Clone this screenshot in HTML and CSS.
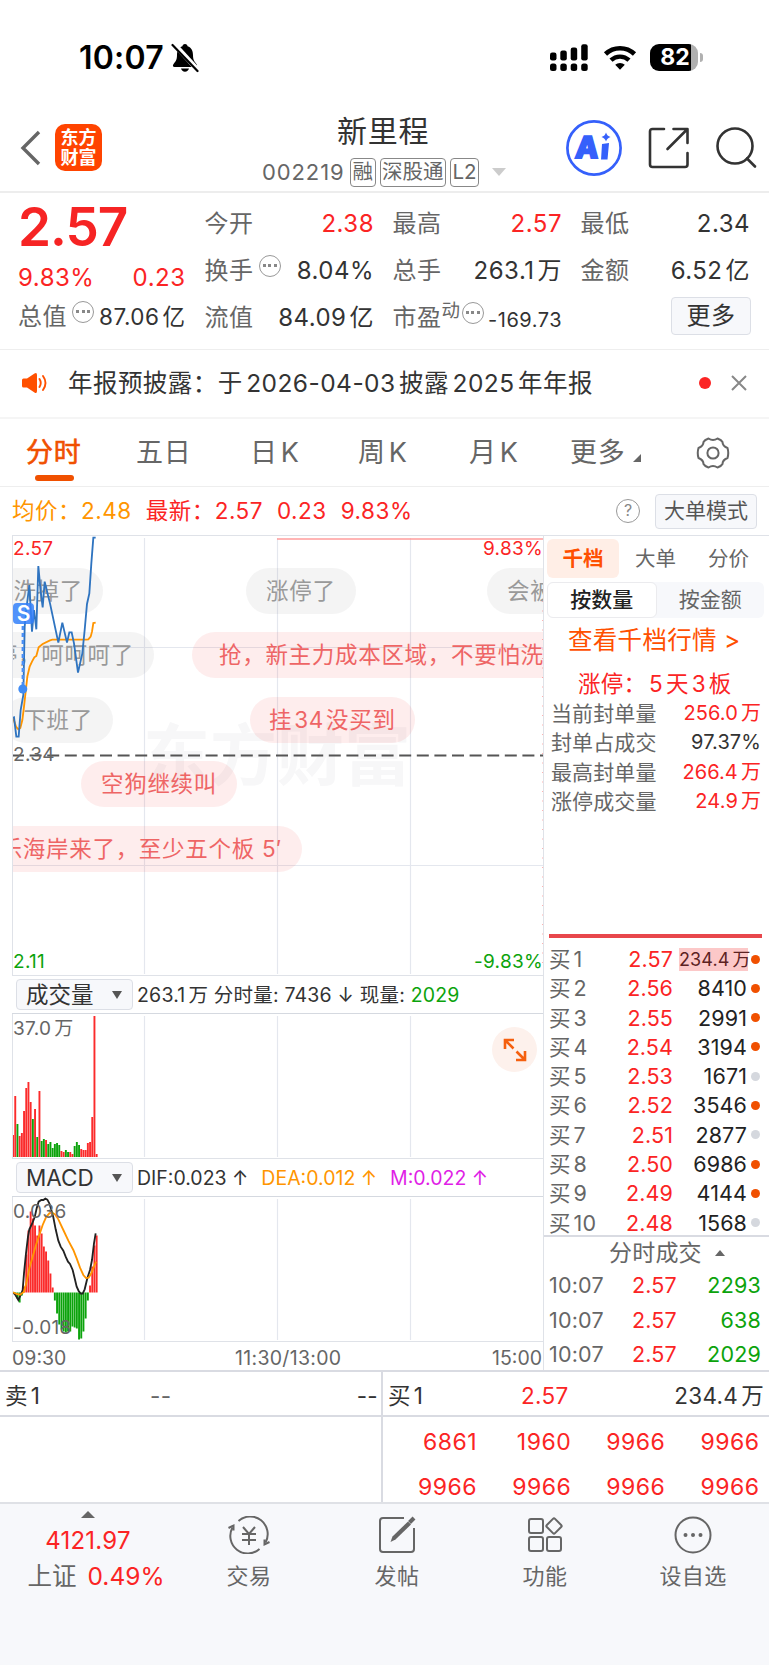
FILE: index.html
```
<!DOCTYPE html>
<html lang="zh-CN">
<head>
    <meta charset="UTF-8">
    <meta name="viewport" content="width=device-width, initial-scale=1.0">
    <title>新里程 002219</title>
    <link rel="stylesheet" href="styles.css">
</head>
<body>
<!--Status bar-->
<div class="status">
    <span class="time">10:07</span>
    <svg class="bell" width="28" height="30" viewBox="0 0 28 30">
        <path d="M14 1c-1.600 0-2.500 1-2.600 2.300C7.600 4.600 6 8 6 12c0 5-1.500 6.500-3.600 9.300C1.400 22.800 2 24 3.600 24h20.800c1.600 0 2.200-1.200 1.200-2.700C23.500 18.500 22 17 22 12c0-4-1.600-7.400-5.400-8.700C16.500 2 15.600 1 14 1zM10 25.500h8c-.5 2-2 3.200-4 3.200s-3.500-1.200-4-3.200z" fill="#000"/>
        <path d="M3 1l24 26" stroke="#fff" stroke-width="5"/>
        <path d="M1.500 2l25 26" stroke="#000" stroke-width="2.200" stroke-linecap="round"/>
    </svg>
    <svg class="signal" width="40" height="28" viewBox="0 0 40 28">
        <rect x="1" y="8.500" width="6.500" height="8" rx="2.200"/><rect x="11.300" y="6.500" width="6.500" height="10" rx="2.200"/>
        <rect x="21.700" y="3.500" width="6.500" height="13" rx="2.200"/><rect x="32.200" y=".3" width="6.500" height="16.200" rx="2.200"/>
        <rect x="1" y="19.500" width="6.500" height="7.500" rx="2.500"/><rect x="11.300" y="19.500" width="6.500" height="7.500" rx="2.500"/>
        <rect x="21.700" y="19.500" width="6.500" height="7.500" rx="2.500"/><rect x="32.200" y="19.500" width="6.500" height="7.500" rx="2.500"/>
    </svg>
    <svg class="wifi" width="34" height="25" viewBox="0 0 34 25">
        <path d="M2.500 9a21 21 0 0 1 29 0" fill="none" stroke="#000" stroke-width="4.600"/>
        <path d="M8 15.200a13 13 0 0 1 18 0" fill="none" stroke="#000" stroke-width="4.400"/>
        <path d="M17 24.800l-4.800-5a7 7 0 0 1 9.600 0z" fill="#000"/>
    </svg>
    <div class="battery"><span>82</span></div><i class="nub"></i>
</div>

<!--Header-->
<header class="header">
    <svg class="back" width="22" height="36" viewBox="0 0 22 36"><path d="M19 2L3 18l16 16" fill="none" stroke="#666" stroke-width="3.400"/></svg>
    <div class="logo">东方<br>财富</div>
    <div class="title">
        <h1>新里程</h1>
        <div class="code"><span>002219</span><b>融</b><b>深股通</b><b>L2</b><i class="down"></i></div>
    </div>
    <svg class="ai" width="56" height="56" viewBox="0 0 56 56">
        <circle cx="28" cy="28" r="26.600" fill="#fff" stroke="#3560fb" stroke-width="2.700"/>
        <text x="9" y="38" class="ai-text" transform="skewX(-4) translate(2.500 0)">A</text>
        <path d="M36 24l7-1-1.500 16.500h-6.500z" fill="#3560fb"/>
        <path d="M40 12.500q1 3.500 4.500 4.500q-3.500 1-4.500 4.500q-1-3.500-4.500-4.500q3.500-1 4.500-4.500z" fill="#3560fb"/>
    </svg>
    <svg class="share" width="42" height="42" viewBox="0 0 42 42" fill="none" stroke="#333" stroke-width="2.600" stroke-linecap="round" stroke-linejoin="round">
        <path d="M16 2H4.500Q2 2 2 4.500v33Q2 40 4.500 40h32.500q2.500 0 2.500-2.500V26"/>
        <path d="M25.500 2h14v14M38.500 3L19.500 22"/>
    </svg>
    <svg class="search" width="42" height="42" viewBox="0 0 42 42" fill="none" stroke="#333" stroke-width="2.600" stroke-linecap="round">
        <circle cx="20" cy="19" r="17.500"/><path d="M32 31.500l8 8"/>
    </svg>
</header>

<!--Quote-->
<section class="quote">
    <div class="now">
        <div class="price">2.57</div>
        <div class="pair change"><span>9.83%</span><span>0.23</span></div>
        <div class="pair cap"><label>总值<i class="more"></i></label><span>87.06<em>亿</em></span></div>
    </div>
    <div class="stats">
        <div class="pair"><label>今开</label><span class="red">2.38</span></div>
        <div class="pair"><label>最高</label><span class="red">2.57</span></div>
        <div class="pair"><label>最低</label><span>2.34</span></div>
        <div class="pair"><label>换手<i class="more"></i></label><span>8.04%</span></div>
        <div class="pair"><label>总手</label><span>263.1<em>万</em></span></div>
        <div class="pair"><label>金额</label><span>6.52<em>亿</em></span></div>
        <div class="pair"><label>流值</label><span>84.09<em>亿</em></span></div>
        <div class="pair"><label>市盈<sup>动</sup><i class="more tight"></i></label><span class="small">-169.73</span></div>
        <div class="pair end"><button class="btn-more">更多</button></div>
    </div>
</section>

<!--Notice-->
<section class="notice">
    <svg width="26" height="22" viewBox="0 0 26 22">
        <path d="M0 8q0-1.500 1.500-1.500H5L12.500 1.500Q15 0 15 3v16q0 3-2.500 1.500L5 15.500H1.500Q0 15.500 0 14z" fill="#ff5000"/>
        <path d="M17.500 7q2.500 4 0 8M21 4q5 7 0 14" fill="none" stroke="#ff5000" stroke-width="1.900" stroke-linecap="round"/>
    </svg>
    <p>年报预披露：于<em>2026-04-03</em>披露<em>2025</em>年年报</p>
    <i class="dot"></i>
    <svg class="close" width="16" height="16" viewBox="0 0 16 16"><path d="M1 1l14 14M15 1L1 15" stroke="#888" stroke-width="2"/></svg>
</section>

<!--Period tabs-->
<nav class="tabs">
    <a class="active">分时</a><a>五日</a><a>日<em>K</em></a><a>周<em>K</em></a><a>月<em>K</em></a><a class="last">更多<i></i></a>
    <svg width="34" height="34" viewBox="-17 -17 34 34" fill="none" stroke="#666" stroke-width="2">
        <path d="M-4.500 -14.500Q0 -11.500 4.500 -14.500Q8.500 -13 9.500 -11Q9.500 -7 14.500 -5Q16 0 14.500 5Q9.500 7 9.500 11Q8.500 13 4.500 14.500Q0 11.500 -4.500 14.500Q-8.500 13 -9.500 11Q-9.500 7 -14.500 5Q-16 0 -14.500 -5Q-9.500 -7 -9.500 -11Q-8.500 -13 -4.500 -14.500z"/>
        <circle r="5.600"/>
    </svg>
</nav>

<div class="legend">
    <span class="orange">均价：2.48</span>
    <span class="red">最新：2.57</span>
    <span class="red">0.23</span>
    <span class="red">9.83%</span>
    <i class="help">?</i>
    <button class="btn-mode">大单模式</button>
</div>

<main class="main">
    <div class="charts">
        <!--Price-->
        <div class="plot price-plot">
            <span class="watermark">东方财富</span>
            <svg width="531" height="440" viewBox="12 535 531 440" fill="none">
                <path class="grid-line" d="M144.500 537V973M277.500 537V973M410.500 537V973M12 646.500H543M12 864.500H543"/>
                <path d="M277 538H543" stroke="#ff9c9c" stroke-width="1.600"/>
                <path d="M542.500 600V970" stroke="#ffb3b3" stroke-dasharray="1 8.500"/>
            </svg>
            <div class="barrage">
                <span class="grey b1">洗掉了</span>
                <span class="grey b2">涨停了</span>
                <span class="grey b3">会被洗</span>
                <span class="grey b4">停，呵呵呵了</span>
                <span class="pink b5">抢，新主力成本区域，不要怕洗</span>
                <span class="grey b6">下班了</span>
                <span class="pink b7">挂<em>34</em>没买到</span>
                <span class="pink b8">空狗继续叫</span>
                <span class="pink b9">乐海岸来了，至少五个板 5′</span>
            </div>
            <svg class="lines" width="531" height="440" viewBox="12 535 531 440" fill="none">
                <path d="M12 754.500H543" stroke="#555" stroke-width="1.800" stroke-dasharray="12 5.600"/>
                <g transform="translate(0 529) scale(.33333)">
                    <path id="avgLine" stroke="#ff9500" stroke-width="5.500"/>
                    <path id="priceLine" stroke="#2f74c0" stroke-width="5.500"/>
                </g>
                <path d="M22.800 625V684" stroke="#4a8ff5" stroke-width="2.400" stroke-dasharray="4 3"/>
                <circle cx="22.800" cy="688" r="4.500" fill="#3f8cf5"/>
            </svg>
            <i class="sell">S</i>
            <span class="lab tl red">2.57</span>
            <span class="lab tr red">9.83%</span>
            <span class="lab ml">2.34</span>
            <span class="lab bl green">2.11</span>
            <span class="lab br green">-9.83%</span>
        </div>
        <!--Volume-->
        <div class="sub-head">
            <button class="picker">成交量<i></i></button>
            <p>263.1<em>万</em> 分时量: 7436 ↓ 现量: <span class="green">2029</span></p>
        </div>
        <div class="plot">
            <svg width="531" height="144" viewBox="12 1014 531 144">
                <path class="grid-line" d="M144.500 1016V1157M277.500 1016V1157M410.500 1016V1157"/>
                <g id="volume"></g>
            </svg>
            <span class="lab vl">37.0<em>万</em></span>
            <i class="expand"><svg width="24" height="24" viewBox="0 0 24 24" fill="none" stroke="#f5600f" stroke-width="2.600"><path d="M2 11V2h9M2.500 2.500l8 8M13 22h9v-9M21.500 21.500l-8-8"/></svg></i>
        </div>
        <!--MACD-->
        <div class="sub-head macd-head">
            <button class="picker">MACD<i></i></button>
            <p>DIF:0.023 ↑</p><p class="orange">DEA:0.012 ↑</p><p class="magenta">M:0.022 ↑</p>
        </div>
        <div class="plot">
            <span class="lab vl">0.036</span>
            <svg width="531" height="144" viewBox="12 1197 531 144" fill="none">
                <path class="grid-line" d="M144.500 1199V1340M277.500 1199V1340M410.500 1199V1340"/>
                <g id="macd"></g>
                <g transform="translate(0 970) scale(.33333)">
                    <path id="difLine" stroke="#222" stroke-width="5.500"/>
                    <path id="deaLine" stroke="#ff9500" stroke-width="5.500"/>
                </g>
            </svg>
            <span class="lab dl">-0.018</span>
        </div>
        <div class="axis"><span>09:30</span><span>11:30/13:00</span><span>15:00</span></div>
    </div>

    <!--Order book-->
    <aside class="book">
        <div class="book-tabs"><a class="active">千档</a><a>大单</a><a>分价</a></div>
        <div class="segment"><a class="active">按数量</a><a>按金额</a></div>
        <a class="link">查看千档行情 &gt;</a>
        <h2>涨停：<em>5</em>天<em>3</em>板</h2>
        <dl>
            <dt>当前封单量</dt><dd class="red">256.0<em>万</em></dd>
            <dt>封单占成交</dt><dd>97.37%</dd>
            <dt>最高封单量</dt><dd class="red">266.4<em>万</em></dd>
            <dt>涨停成交量</dt><dd class="red">24.9<em>万</em></dd>
        </dl>
        <div class="bids" id="bids"></div>
        <div class="deals-title">分时成交<i></i></div>
        <div class="deals">
            <span>10:07</span><span class="red">2.57</span><span class="green">2293</span>
            <span>10:07</span><span class="red">2.57</span><span class="green">638</span>
            <span>10:07</span><span class="red">2.57</span><span class="green">2029</span>
        </div>
    </aside>
</main>

<!--Level 2 queue-->
<section class="queue">
    <div class="side">
        <div class="best"><span>卖<em>1</em></span><span class="dash">--</span><span>--</span></div>
    </div>
    <div class="side buy">
        <div class="best"><span>买<em>1</em></span><span class="red">2.57</span><span>234.4<em>万</em></span></div>
        <div class="orders">
            <span>6861</span><span>1960</span><span>9966</span><span>9966</span>
            <span>9966</span><span>9966</span><span>9966</span><span>9966</span>
        </div>
    </div>
</section>

<!--Bottom bar-->
<footer class="bottom">
    <div class="index">
        <i></i>
        <span class="red">4121.97</span>
        <span class="market">上证<b class="red">0.49%</b></span>
    </div>
    <div class="item">
        <svg width="44" height="38" viewBox="-22 -19 44 38" fill="none" stroke="#666" stroke-width="2">
            <path d="M-10.500 -14A17.500 17.500 0 0 1 16.500 7.500M10.500 14A17.500 17.500 0 0 1 -16.500 -7.500"/>
            <path d="M-20.500 -7l5-2.500v5M20.500 7l-5 2.500v-5M-6 -8l6 7 6-7M0 -1V10M-7 -1H7M-7 5H7"/>
        </svg>
        <span>交易</span>
    </div>
    <div class="item">
        <svg width="38" height="38" viewBox="0 0 38 38" fill="none" stroke="#666" stroke-width="2">
            <path d="M26 2H5Q2 2 2 5v28q0 3 3 3h28q3 0 3-3V12"/>
            <path d="M12.500 26l2-5.500L30 5.500l3 3L17.500 23.500z" fill="#666" stroke="none"/><path d="M31.500 6.500l4.500-4.500" stroke-width="4"/>
        </svg>
        <span>发帖</span>
    </div>
    <div class="item">
        <svg width="36" height="38" viewBox="0 0 36 38" fill="none" stroke="#666" stroke-width="2">
            <rect x="2" y="3" width="14" height="14" rx="2"/><rect x="2" y="21" width="14" height="14" rx="2"/><rect x="20" y="21" width="14" height="14" rx="2"/>
            <rect x="-5.800" y="-5.800" width="11.600" height="11.600" rx="1.500" transform="translate(27 10) rotate(45)"/>
        </svg>
        <span>功能</span>
    </div>
    <div class="item">
        <svg width="38" height="38" viewBox="0 0 38 38" fill="none" stroke="#666" stroke-width="2">
            <circle cx="19" cy="19" r="17.500"/>
            <path d="M11.500 19h.01M19 19h.01M26.500 19h.01" stroke-width="4" stroke-linecap="round"/>
        </svg>
        <span>设自选</span>
    </div>
</footer>

<script>
    const RED = "#fb2b2b";
    const GREEN = "#0ca30c";
    const STEP = 2.2;

    //volume per minute, negative means a falling minute
    const volume = [22, 61, -33, 21, 24, 46, 69, 75, 55, -38, 48, -20, 66, -16, -18, 17, -13, -15, -9, -13, -14, -12,
        6, 5, -7, -5, 5, 3, -11, -15, -12, 8, 7, 7, 14, 15, 40, 141, 3];
    //macd histogram
    const macd = [0, -2, -6, -10, -3, 6, 38, 62, 81, 74, 67, 57, 67, 59, 46, 41, 32, 19, 5, -8, -21, -32, -37, -39,
        -40, -39, -39, -34, -35, -36, -47, -46, -39, -26, -8, 7, 26, 47, 57];

    function bar(i, top, height, color) {
        return `<rect x="${(12.1 + i * STEP).toFixed(1)}" y="${top}" width="1.9" height="${height}" fill="${color}"/>`;
    }
    document.getElementById("volume").innerHTML = volume.map((v, i) =>
        bar(i, 1157 - Math.abs(v), Math.abs(v), v < 0 ? GREEN : RED)).join("");
    document.getElementById("macd").innerHTML = macd.map((v, i) =>
        bar(i, v < 0 ? 1292.5 : 1292.5 - v, Math.abs(v), v < 0 ? GREEN : RED)).join("");

    //lines
    const lines = {
        priceLine: "39,563 42,562 49,620 56,620 62,540 70,495 74,290 80,230 88,165 96,305 102,240 109,298 115,108 122,185 128,232 134,155 150,220 175,338 187,278 201,338 208,307 215,307 222,340 234,428 247,370 254,300 261,222 268,190 274,100 280,23 287,23",
        avgLine: "39,563 48,590 55,598 61,594 67,570 72,530 77,485 82,440 89,410 96,395 103,382 109,378 116,352 128,342 150,331 157,329 258,329 265,328 272,320 276,305 280,279 287,278",
        difLine: "39,967 45,973 55,990 62,975 68,960 72,910 78,850 84,800 88,778 96,762 104,742 110,715 116,695 124,690 130,690 136,686 142,689 148,700 154,720 160,742 167,778 175,812 182,830 190,842 197,860 204,875 210,882 218,900 224,925 230,950 236,963 242,971 248,971 254,958 262,925 270,900 276,870 282,820 287,790",
        deaLine: "39,967 50,972 60,974 66,970 72,965 80,935 88,895 98,860 108,825 118,795 128,765 138,742 148,730 155,727 165,733 175,748 190,780 205,812 220,840 230,865 240,893 250,915 258,924 266,923 274,910 282,890 288,875"
    };
    for (const id in lines) {
        document.getElementById(id).setAttribute("d", "M" + lines[id].split(" ").join("L"));
    }

    //bids: price, amount, large order flag
    const bids = [["2.57", "234.4<em>万</em>", 1], ["2.56", "8410", 1], ["2.55", "2991", 1], ["2.54", "3194", 1], ["2.53", "1671", 0],
        ["2.52", "3546", 1], ["2.51", "2877", 0], ["2.50", "6986", 1], ["2.49", "4144", 1], ["2.48", "1568", 0]];
    document.getElementById("bids").innerHTML = bids.map((b, i) =>
        `<div class="bid"><span>买<em>${i + 1}</em></span><span class="red">${b[0]}</span><span class="amount">${b[1]}</span><i class="${b[2] ? "big" : ""}"></i></div>`).join("");
</script>
</body>
</html>
```

FILE: styles.css
```
* {
    box-sizing: border-box;
}
body {
    margin: 0;
    width: 769px;
    height: 1665px;
    overflow: hidden;
    background: #fff;
    color: #333;
    font-family: Inter, "Noto Sans CJK SC", sans-serif;
    font-size: 22px;
    line-height: 30px;
    white-space: nowrap;
}
h1, h2, p, dl, dd {
    margin: 0;
    font-weight: 400;
}
em, i {
    font-style: normal;
}
button {
    font: inherit;
    color: inherit;
    padding: 0;
    border: 1px solid #dcdfe6;
    border-radius: 4px;
    background: #f7f8fb;
}
svg {
    display: block;
    flex: none;
}
.red { color: #fb2424; }
.green { color: #0ca30c; }
.orange { color: #ff9500; }
.magenta { color: #e01ee6; }

/* status bar */
.status {
    display: flex;
    align-items: center;
    height: 114px;
    padding: 1px 0 0 79px;
    color: #000;
}
.time {
    width: 92px;
    font-size: 32px;
    font-weight: 600;
    letter-spacing: .2px;
}
.signal {
    margin-left: 350px;
}
.wifi {
    margin-left: 14px;
}
.battery {
    width: 48px;
    height: 27px;
    margin-left: 13px;
    padding-left: 2px;
    border-radius: 9px;
    background: linear-gradient(90deg, #000 41px, #b0b0b0 41px);
    color: #fff;
    font-size: 23px;
    font-weight: 700;
    line-height: 27px;
    text-align: center;
}
.nub {
    width: 3px;
    height: 9px;
    margin-left: 2px;
    border-radius: 0 4px 4px 0;
    background: #b0b0b0;
}

/* header */
.header {
    display: flex;
    height: 79px;
    padding-left: 20px;
    border-bottom: 2px solid #ededed;
}
.back {
    margin-top: 16px;
}
.logo {
    width: 47px;
    height: 47px;
    margin: 10px 0 0 13px;
    padding-top: 4px;
    border-radius: 10px;
    background: #ff4400;
    color: #fff;
    font-size: 18px;
    font-weight: 700;
    line-height: 19.5px;
    text-align: center;
}
.title {
    width: 250px;
    margin-left: 158px;
}
.title h1 {
    margin: -2px 0 6px 77px;
    font-size: 30px;
    line-height: 38px;
    letter-spacing: .7px;
}
.code {
    display: flex;
    align-items: center;
    padding-left: 2px;
    color: #666;
    font-size: 22px;
    line-height: 32px;
}
.code span {
    width: 84px;
    letter-spacing: .9px;
}
.code b {
    height: 29px;
    margin-left: 4px;
    padding: 0 1.500px;
    border: 1.5px solid #888;
    border-radius: 4px;
    font-size: 20.500px;
    font-weight: 400;
    line-height: 26px;
}
.down {
    margin-left: 13px;
    border: 7px solid transparent;
    border-top: 8px solid #ccc;
    border-bottom: 0;
}
.ai {
    margin: 6px 0 0 56px;
}
.ai-text {
    fill: #3560fb;
    stroke: #3560fb;
    stroke-width: 2;
    font-size: 30px;
    font-weight: 800;
}
.share {
    margin: 13px 0 0 26px;
}
.search {
    margin: 13px 0 0 25px;
}

/* quote */
.quote {
    display: flex;
    gap: 19px;
    height: 157px;
    padding: 0 19px 0 18px;
    border-bottom: 1px solid #eee;
    font-size: 24px;
}
.now {
    width: 169px;
    color: #fb2424;
}
.price {
    height: 70px;
    color: #f62424;
    font-size: 53px;
    font-weight: 600;
    line-height: 68px;
    letter-spacing: -1px;
}
.pair {
    display: flex;
    align-items: center;
    justify-content: space-between;
    letter-spacing: .5px;
}
.change {
    height: 30px;
}
.cap {
    height: 47px;
    font-size: 22.500px;
    color: #333;
}
.stats {
    display: grid;
    grid-template-columns: repeat(3, 169.500px);
    grid-auto-rows: 47px;
    column-gap: 18.500px;
    padding-top: 7px;
}
label {
    display: flex;
    align-items: center;
    color: #666;
    font-size: 24px;
}
.pair em, dd em, .queue em, .amount em, .lab em, .sub-head em {
    margin-left: 3px;
}
.more {
    flex: none;
    width: 22px;
    height: 22px;
    margin: -10px 0 0 5px;
    border: 1.500px solid #999;
    border-radius: 50%;
    background: radial-gradient(circle, #888 1.500px, transparent 1.800px) center / 5px 5px no-repeat,
        radial-gradient(circle, #888 1.500px, transparent 1.800px) 2px center / 5px 5px no-repeat,
        radial-gradient(circle, #888 1.500px, transparent 1.800px) 13px center / 5px 5px no-repeat;
}
.more.tight {
    margin-left: 1px;
}
sup {
    margin: -15px 0 0 0;
    font-size: 18.500px;
    line-height: 20px;
}
.small {
    font-size: 20px;
    padding-top: 5px;
}
.pair.end {
    justify-content: flex-end;
}
.btn-more {
    width: 80px;
    height: 38px;
    margin: -4px -1px 0 0;
    letter-spacing: .5px;
}

/* notice */
.notice {
    display: flex;
    align-items: center;
    height: 69px;
    padding: 0 0 1px 22px;
    border-bottom: 2px solid #f5f5f5;
    font-size: 24.500px;
}
.notice p {
    width: 607px;
    margin-left: 20px;
    letter-spacing: .45px;
}
.notice em {
    margin: 0 3.500px;
}
.dot {
    width: 12px;
    height: 12px;
    margin-left: 24px;
    border-radius: 50%;
    background: #fb2424;
}
.close {
    margin-left: 20px;
}

/* period tabs */
.tabs {
    display: flex;
    align-items: center;
    height: 68px;
    padding-left: 26px;
    border-bottom: 1px solid #eee;
    color: #666;
    font-size: 27px;
    letter-spacing: .7px;
}
.tabs a {
    width: 114px;
    height: 67px;
    line-height: 67px;
}
.tabs a:first-child { width: 110px; }
.tabs a:nth-child(4) { width: 111px; }
.tabs a:nth-child(5) { width: 101px; }
.tabs em {
    margin-left: 3px;
}
.tabs .active {
    color: #f05000;
    -webkit-text-stroke: .6px #f05000;
}
.tabs .active::after {
    content: "";
    display: block;
    width: 39px;
    height: 6px;
    margin: -11px 0 0 9px;
    border-radius: 3px;
    background: #f05000;
}
.tabs a:nth-child(3) {
    width: 108px;
}
.tabs a.last {
    width: 126px;
}
.last i {
    display: inline-block;
    margin-left: 8px;
    border-left: 8px solid transparent;
    border-bottom: 8px solid #666;
}

.legend {
    display: flex;
    align-items: center;
    height: 48px;
    padding-left: 12px;
    font-size: 22.500px;
}
.legend span {
    margin-right: 14px;
    letter-spacing: .5px;
}
.help {
    width: 24px;
    height: 24px;
    margin-left: auto;
    border: 1.500px solid #999;
    border-radius: 50%;
    color: #888;
    font-size: 16px;
    line-height: 21px;
    text-align: center;
}
.btn-mode {
    width: 102px;
    height: 35px;
    margin: 0 12px 0 15px;
    color: #555;
    font-size: 21px;
}

/* charts */
.main {
    display: flex;
    height: 837px;
    padding-left: 12px;
    border-bottom: 2px solid #d9dbe2;
}
.charts {
    width: 532px;
    border-top: 1px solid #dfe2e8;
    border-right: 1px solid #dfe2e8;
}
.plot {
    position: relative;
    height: 145px;
    overflow: hidden;
    border-left: 1px solid #dfe2e8;
    border-bottom: 1px solid #dfe2e8;
}
.plot > svg {
    margin-left: -1px;
}
.price-plot {
    height: 440px;
}
.grid-line {
    stroke: #e4e7ee;
    stroke-width: 1.2;
}
.watermark {
    position: absolute;
    left: 130px;
    top: 180px;
    color: #f7f7f8;
    font-size: 67px;
    font-weight: 700;
    line-height: 80px;
}
.price-plot > svg {
    position: relative;
}
.price-plot > .lines {
    position: absolute;
    left: 0;
    top: 0;
}
.barrage span {
    position: absolute;
    height: 46px;
    padding: 0 20px;
    border-radius: 23px;
    font-size: 22.500px;
    line-height: 46px;
    letter-spacing: .7px;
}
.barrage .grey {
    background: rgba(120, 120, 120, .08);
    color: #999;
}
.barrage .pink {
    background: rgba(245, 50, 60, .09);
    color: #ee6565;
}
.barrage em {
    margin: 0 2px;
}
.b1 { right: 440px; top: 32px; }
.b2 { left: 233px; top: 32px; }
.b3 { left: 474px; top: 32px; }
.b4 { right: 389px; top: 96px; }
.barrage .b5 { left: 179px; top: 96px; padding-left: 27px; }
.b6 { right: 430px; top: 161px; }
.barrage .b7 { left: 237px; top: 161px; padding: 0 19px; }
.b8 { left: 68px; top: 225px; }
.b9 { right: 241px; top: 290px; }
.sell {
    position: absolute;
    left: 0;
    top: 67px;
    width: 21px;
    height: 21px;
    border-radius: 4px;
    background: rgba(51, 128, 250, .85);
    color: #fff;
    font-size: 21px;
    font-weight: 600;
    line-height: 21px;
    text-align: center;
}
.lab {
    position: absolute;
    color: #666;
    font-size: 19px;
    line-height: 22px;
    letter-spacing: .3px;
}
.lab.red { color: #fb2424; }
.lab.green { color: #0ca30c; }
.tl { left: 0; top: 2px; }
.tr { right: 0; top: 2px; }
.ml { left: 0; top: 208px; }
.bl { left: 0; bottom: 2px; }
.br { right: 0; bottom: 2px; }
.vl { left: 0; top: 4px; }
.dl { left: 0; bottom: 2px; }
.sub-head {
    display: flex;
    align-items: center;
    height: 38px;
    padding-left: 4px;
    border-bottom: 1px solid #d5d9e0;
    font-size: 19.500px;
    letter-spacing: .2px;
}
.sub-head p {
    margin-left: 4px;
}
.macd-head {
    letter-spacing: 0;
}
.sub-head p + p {
    margin-left: 13px;
}
.picker {
    display: flex;
    align-items: center;
    justify-content: space-between;
    width: 117px;
    height: 31px;
    padding: 0 10px 0 9px;
    font-size: 22.500px;
}
.picker i {
    border: 5px solid transparent;
    border-top: 8px solid #555;
    border-bottom: 0;
}
.expand {
    position: absolute;
    right: 6px;
    top: 13px;
    width: 45px;
    height: 45px;
    padding: 11px;
    border-radius: 50%;
    background: #fdf1ec;
}
.axis {
    display: grid;
    grid-template-columns: 223px 1fr auto;
    padding: 1px 1px 0 0;
    color: #666;
    font-size: 19.500px;
    letter-spacing: .3px;
}
.axis span:first-child,
.axis span:last-child {
    letter-spacing: 0;
}

/* order book */
.book {
    width: 225px;
    border-top: 1px solid #dfe2e8;
}
.book-tabs {
    display: flex;
    height: 39px;
    margin: 3px 0 0 3px;
    color: #666;
    font-size: 20.500px;
    line-height: 39px;
    text-align: center;
}
.book-tabs a {
    width: 73px;
}
.book-tabs .active {
    width: 72px;
    border-radius: 6px;
    background: #ffeee6;
    color: #ff5000;
    font-weight: 700;
}
.segment {
    display: flex;
    width: 217px;
    height: 36px;
    margin: 4px 0 0 3px;
    border-radius: 6px;
    background: #f7f8fb;
    color: #666;
    font-size: 21px;
    line-height: 35px;
    text-align: center;
}
.segment a {
    flex: 1;
}
.segment .active {
    border: 1px solid #ebebee;
    border-radius: 6px;
    background: #fff;
    color: #222;
    font-weight: 500;
    line-height: 33px;
}
.link {
    display: block;
    margin: 6px 0 0 24px;
    color: #ff5000;
    font-size: 24.500px;
    line-height: 32px;
    letter-spacing: .3px;
}
.book h2 {
    margin: 13px 0 0 34px;
    color: #fb2424;
    font-size: 22.500px;
    line-height: 30px;
    letter-spacing: .2px;
}
.book h2 em {
    margin: 0 3px;
}
dl {
    display: grid;
    grid-template-columns: auto auto;
    grid-auto-rows: 29.300px;
    height: 235px;
    padding: 0 8px 0 7px;
    align-content: start;
    justify-content: space-between;
    color: #666;
    font-size: 21px;
    line-height: 29px;
    letter-spacing: .1px;
}
dd {
    color: #333;
    text-align: right;
    font-size: 20px;
}
.bids {
    height: 303px;
    padding-top: 9px;
    border-bottom: 2px solid #d9dbe2;
}
.bids::before {
    content: "";
    display: block;
    width: 213px;
    height: 4px;
    margin: -9px 0 6px 5px;
    background: #e8474c;
}
.bid {
    display: grid;
    grid-template-columns: 50px 74px 74px 9px;
    align-items: center;
    height: 29.300px;
    padding-left: 5px;
    color: #666;
    font-size: 21.500px;
    letter-spacing: .1px;
}
.bid em {
    margin-left: 3px;
}
.bid span:not(:first-child) {
    text-align: right;
}
.bid .amount {
    color: #222;
}
.bid i {
    width: 9px;
    height: 9px;
    margin-left: 4px;
    border-radius: 50%;
    background: #d5d8de;
}
.bid i.big {
    background: #f05000;
}
.bid:first-child .amount {
    width: 69px;
    height: 23px;
    margin-left: 6px;
    background: #fcc8c8;
    color: #5c2222;
    font-size: 18px;
    line-height: 24px;
}
.deals-title {
    display: flex;
    align-items: center;
    height: 32px;
    padding-left: 65px;
    color: #666;
    font-size: 23px;
    letter-spacing: .2px;
}
.deals-title i {
    margin-left: 13px;
    border: 5px solid transparent;
    border-top: 0;
    border-bottom: 6px solid #666;
}
.deals {
    display: grid;
    grid-template-columns: 55px 73px 84px;
    grid-auto-rows: 34.500px;
    margin-top: -1px;
    padding-left: 5px;
    line-height: 34px;
    font-size: 21.500px;
    letter-spacing: .2px;
    color: #666;
}
.deals span:not(:nth-child(3n + 1)) {
    text-align: right;
}
.deals .red { color: #fb2424; }
.deals .green { color: #0ca30c; }

/* level 2 queue */
.queue {
    display: flex;
    height: 132px;
    border-bottom: 2px solid #dfe1e6;
}
.side {
    width: 383px;
    border-right: 2px solid #d9dbe2;
}
.side.buy {
    width: 386px;
    border-right: 0;
}
.best {
    display: grid;
    grid-template-columns: 145px 1fr 1fr;
    align-items: center;
    height: 45px;
    padding: 4px 3px 0 5px;
    border-bottom: 2px solid #d9dbe2;
    font-size: 22.500px;
    letter-spacing: .3px;
}
.buy .best {
    grid-template-columns: 133px 1fr 1fr;
    padding-right: 5px;
}
.best span:last-child {
    text-align: right;
}
.dash {
    color: #666;
}
.orders {
    display: grid;
    grid-template-columns: 94px repeat(3, 94.200px);
    grid-auto-rows: 45px;
    padding-top: 3px;
    line-height: 45px;
    font-size: 23px;
    letter-spacing: .5px;
    text-align: right;
    color: #fb2424;
}

/* bottom bar */
.bottom {
    display: flex;
    height: 161px;
    background: #f7f8fb;
    color: #666;
    font-size: 22px;
}
.index {
    display: flex;
    flex-direction: column;
    align-items: center;
    width: 175px;
    padding: 7px 0 0 1px;
    font-size: 24.500px;
}
.index i {
    border: 7px solid transparent;
    border-top: 0;
    border-bottom: 7px solid #666;
}
.index .red {
    font-weight: 400;
}
.index span {
    height: 35px;
    line-height: 46px;
}
.index > .red {
    font-size: 24px;
    letter-spacing: .2px;
}
.market {
    padding-left: 16px;
}
.market b {
    margin-left: 11px;
}
.item {
    display: flex;
    flex-direction: column;
    align-items: center;
    width: 148px;
    padding-top: 12px;
    gap: 7px;
}
.item span {
    letter-spacing: .4px;
}
```
